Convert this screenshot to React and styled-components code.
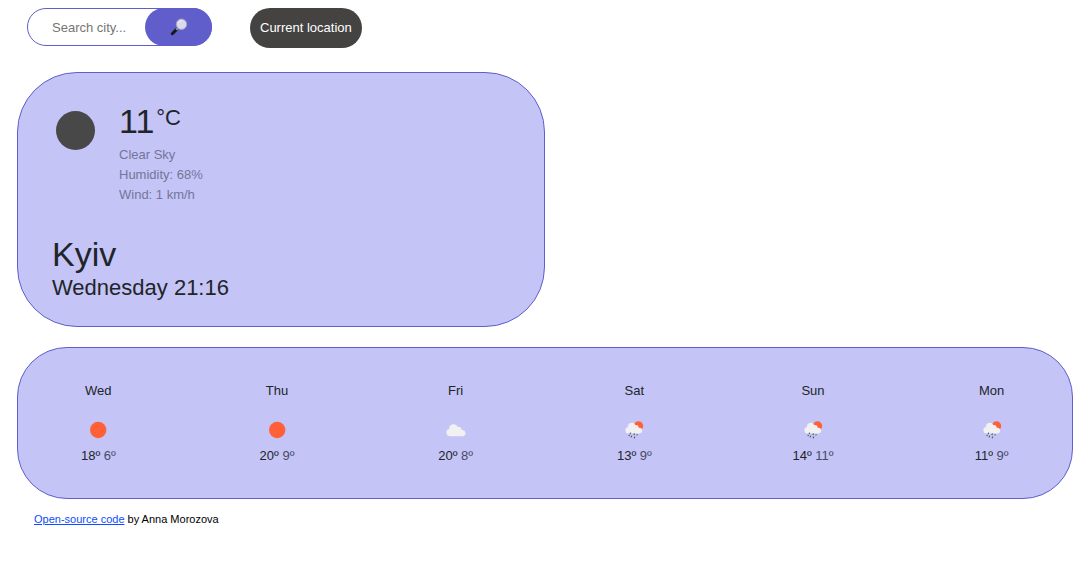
import React from "react";
import styled, { createGlobalStyle } from "styled-components";

const GlobalStyle = createGlobalStyle`
  *, *::before, *::after { box-sizing: border-box; }
  body {
    margin: 0;
    background: #fff;
    color: #212529;
    font: 13px/20px "Liberation Sans", Arial, sans-serif;
  }
`;

const Page = styled.main`
  padding: 8px 17px;
`;

const Toolbar = styled.header`
  display: flex;
  align-items: flex-start;
  gap: 38px;
  padding-left: 10px;
  margin-bottom: 24px;
`;

const SearchForm = styled.form`
  display: flex;
  width: 185px;
  height: 38px;
  border: 1px solid #605ecb;
  border-radius: 20px;
`;

const SearchInput = styled.input`
  flex: 1;
  min-width: 0;
  padding: 2px 0 0 24px;
  border: 0;
  outline: 0;
  background: transparent;
  color: #212529;
  font: inherit;

  &::placeholder {
    color: #757575;
    opacity: 1;
  }
`;

const SearchButton = styled.button`
  display: flex;
  align-items: center;
  justify-content: center;
  width: 67px;
  margin: -1px;
  padding: 0;
  border: 0;
  border-radius: 20px;
  background: #605ecb;
  cursor: pointer;
`;

const LocationButton = styled.button`
  height: 40px;
  padding: 0 10px;
  border: 0;
  border-radius: 20px;
  background: #444342;
  color: #fff;
  font: inherit;
  white-space: nowrap;
  cursor: pointer;
`;

const Card = styled.section`
  border: 1px solid #605ecb;
  background: #c4c4f6;
`;

const CurrentCard = styled(Card)`
  width: 50%;
  min-width: 280px;
  margin-bottom: 20px;
  padding: 29px 34px 24px;
  border-radius: 60px;
`;

const Conditions = styled.div`
  display: flex;
  gap: 20px;
  margin-bottom: 29px;
`;

const CurrentIcon = styled.svg`
  width: 47px;
  height: 47px;
  margin-top: 5px;
`;

const Temperature = styled.div`
  display: flex;
  align-items: flex-start;
  gap: 2px;
  margin-bottom: 5px;
  font-size: 34px;
  line-height: 38px;
`;

const Unit = styled.span`
  font-size: 22px;
  line-height: 32px;
`;

const Details = styled.ul`
  margin: 0;
  padding: 0;
  list-style: none;
  color: #75759a;
`;

const City = styled.h1`
  margin: 0;
  font-size: 34px;
  font-weight: 400;
  line-height: 40px;
`;

const LocalTime = styled.h2`
  margin: 0;
  font-size: 22px;
  font-weight: 400;
  line-height: 28px;
`;

const ForecastCard = styled(Card)`
  padding: 33px 0 32px;
  border-radius: 50px;
`;

const Days = styled.div`
  display: grid;
  grid-template-columns: repeat(6, 1fr);
  margin: 0 -9px;
`;

const Day = styled.article`
  display: flex;
  flex-direction: column;
  align-items: center;
`;

const DayIcon = styled.svg`
  width: 24px;
  height: 24px;
  margin: 17px 0 4px;
`;

const Low = styled.span`
  color: #494b66;
`;

const Footer = styled.footer`
  padding: 10px 17px;
  color: #000;
  font-size: 11px;
`;

const SourceLink = styled.a`
  color: #0d4dfd;
  text-decoration: underline;
`;

const forecast = [
  { day: "Wed", icon: "sun", high: 18, low: 6 },
  { day: "Thu", icon: "sun", high: 20, low: 9 },
  { day: "Fri", icon: "cloud", high: 20, low: 8 },
  { day: "Sat", icon: "rain", high: 13, low: 9 },
  { day: "Sun", icon: "rain", high: 14, low: 11 },
  { day: "Mon", icon: "rain", high: 11, low: 9 },
];

function Magnifier() {
  return (
    <svg width="18" height="18" viewBox="0 0 18 18" aria-hidden="true">
      <path d="M2.3 15.7 6.4 11.6" stroke="#171717" strokeWidth="3" strokeLinecap="round" />
      <path d="m6.2 11.8 1.8-1.8" stroke="#96969d" strokeWidth="1.8" />
      <circle cx="11.5" cy="6.2" r="5.2" fill="#d9d9f2" stroke="#a5a3b5" strokeWidth="1" />
      <path d="M8.2 5.2a3.8 3.8 0 0 1 3.6-2.6" fill="none" stroke="#efeffb" />
    </svg>
  );
}

function WeatherIcon({ type }) {
  return (
    <DayIcon viewBox="0 0 24 24" role="img" aria-label={type}>
      {type === "sun" && <circle cx="12.2" cy="12" r="8.2" fill="#ff6038" />}
      {type === "cloud" && (
        <path
          d="M5.6 18.2a3.6 3.6 0 0 1-.4-7.1 4.5 4.5 0 0 1 8.6-2.2 3 3 0 0 1 3.9 3.1 3.1 3.1 0 1 1 1.2 6.2Z"
          fill="#f1f1f1"
        />
      )}
      {type === "rain" && (
        <>
          <circle cx="16.5" cy="8" r="4.7" fill="#ff6038" />
          <path
            d="M6.2 15.4a3.2 3.2 0 0 1-.3-6.3 3.9 3.9 0 0 1 7.4-2 2.7 2.7 0 0 1 3.4 2.8 2.8 2.8 0 1 1 1 5.5Z"
            fill="#f1f1f1"
          />
          <path
            d="m8.7 14.6-.6 1.4m4.4-.4-.7 1.5m3.5-.9-.5 1.2m-5 .2-.8 1.8m3.8-.8-.7 1.6M7.4 16.8l-.5 1.3"
            fill="none"
            stroke="#4d4d5b"
            strokeWidth="1.1"
          />
        </>
      )}
    </DayIcon>
  );
}

export default function App() {
  return (
    <>
      <GlobalStyle />
      <Page>
        <Toolbar>
          <SearchForm onSubmit={(event) => event.preventDefault()}>
            <SearchInput type="search" placeholder="Search city..." aria-label="Search city" />
            <SearchButton type="submit" aria-label="Search">
              <Magnifier />
            </SearchButton>
          </SearchForm>
          <LocationButton type="button">Current location</LocationButton>
        </Toolbar>

        <CurrentCard>
          <Conditions>
            <CurrentIcon viewBox="0 0 47 47" role="img" aria-label="Clear sky">
              <circle cx="23.5" cy="23.5" r="19.5" fill="#484849" />
            </CurrentIcon>
            <div>
              <Temperature>
                <span>11</span>
                <Unit>°C</Unit>
              </Temperature>
              <Details>
                <li>Clear Sky</li>
                <li>Humidity: 68%</li>
                <li>Wind: 1 km/h</li>
              </Details>
            </div>
          </Conditions>
          <City>Kyiv</City>
          <LocalTime>Wednesday 21:16</LocalTime>
        </CurrentCard>

        <ForecastCard>
          <Days>
            {forecast.map(({ day, icon, high, low }) => (
              <Day key={day}>
                <span>{day}</span>
                <WeatherIcon type={icon} />
                <span>
                  {high}º <Low>{low}º</Low>
                </span>
              </Day>
            ))}
          </Days>
        </ForecastCard>

        <Footer>
          <SourceLink href="#source">Open-source code</SourceLink> by Anna Morozova
        </Footer>
      </Page>
    </>
  );
}
